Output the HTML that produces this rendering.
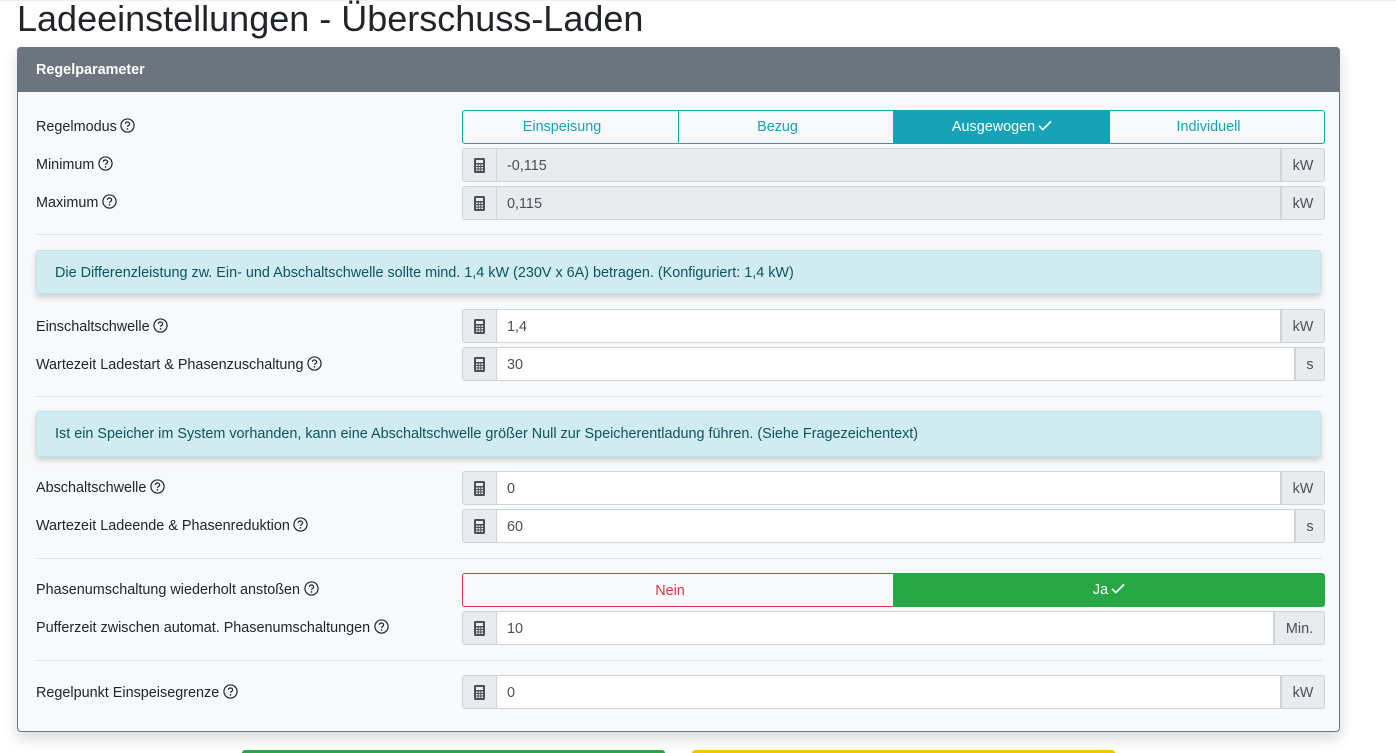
<!DOCTYPE html>
<html lang="de"><head><meta charset="utf-8"><title>Ladeeinstellungen</title>
<style>
*{box-sizing:border-box}
html,body{margin:0;padding:0;width:1396px;height:753px;overflow:hidden;background:#fff;font-family:"Liberation Sans",sans-serif;color:#212529;font-size:14.4px}
.a{position:absolute;white-space:nowrap}
.topshadow{left:0;top:0;width:1396px;height:2px;background:linear-gradient(#ececec,#fff)}
h1{position:absolute;margin:0;left:17px;top:-3px;font-size:36px;line-height:43px;font-weight:400;white-space:nowrap}
.card{left:17px;top:47px;width:1323px;height:685px;background:#f8f9fa;border:1px solid #6c757d;border-radius:4px;box-shadow:0 7px 14px rgba(0,0,0,.15)}
.head{left:17px;top:47px;width:1323px;height:45px;background:#6c757d;border-radius:4px 4px 0 0;color:#fff;font-weight:700;font-size:14.4px;line-height:44px;padding:1px 0 0 19px}
.l{left:36px;height:20px;line-height:20px;font-size:14.4px;color:#212529;display:flex;align-items:center;margin-top:1px}
.l svg{margin-left:3.500px;width:15px;height:15px;position:relative;top:-2px}
.hr{left:36px;width:1286px;height:1px;background:#e1e3e5}
.al{left:36px;width:1285px;background:#d1ecf1;border:1px solid #bee5eb;border-radius:3px;color:#0c5460;font-size:14.4px;padding-left:18px;box-shadow:0 3px 6px rgba(0,0,0,.18)}
.in{left:462px;width:863px;height:34px;display:flex;font-size:14.4px;color:#495057}
.ic{width:35px;background:#e9ecef;border:1px solid #ced4da;border-radius:3px 0 0 3px;display:flex;align-items:center;justify-content:center}
.ic svg{width:11px;height:15px}
.v{flex:1;background:#fff;border:1px solid #ced4da;border-left:0;line-height:33px;padding:1px 0 0 10px}
.v.d{background:#e9ecef}
.u{background:#e9ecef;border:1px solid #ced4da;border-radius:0 3px 3px 0;line-height:33px;padding-top:1px;text-align:center}
.btns{left:462px;top:110px;width:863px;height:34px;display:flex;border:1px solid #17a2b8;border-radius:3px;background:#f8f9fa;color:#17a2b8;font-size:14.4px;line-height:32px;text-align:center;overflow:hidden}
.btns div{border-right:1px solid #17a2b8}
.btns div:last-child{border:0}
.btns .on{background:#17a2b8;color:#fff}
.chk{display:inline-block;width:14px;height:11px;margin-left:3px;vertical-align:0.5px}
.hid{display:inline-block;width:17px;height:1px}
.nein{left:462px;top:573px;width:432px;height:34px;border:1px solid #dc3545;border-right:0;border-radius:3px 0 0 3px;color:#dc3545;text-align:center;line-height:34px;background:#f8f9fa}
.ja{left:893px;top:573px;width:432px;height:34px;background:#28a745;border-radius:0 3px 3px 0;color:#fff;text-align:center;line-height:35px}
.b1{left:242px;top:750px;width:423px;height:3px;background:#28a745;border-radius:4px 4px 0 0}
.b2{left:692px;top:750px;width:423px;height:3px;background:#ffc107;border-radius:4px 4px 0 0}
</style></head><body>
<svg width="0" height="0" style="position:absolute"><defs>
<symbol id="q" viewBox="0 0 16 16"><circle cx="8" cy="8" r="7" fill="none" stroke="#212529" stroke-width="1.3"/><path d="M5.7 6.2C5.8 4.9 6.8 4.3 8 4.3c1.300 0 2.300.8 2.300 1.900 0 1.800-2.300 1.700-2.300 3.300" fill="none" stroke="#212529" stroke-width="1.300"/><circle cx="8" cy="11.600" r=".9" fill="#212529"/></symbol>
<symbol id="c" viewBox="0 0 11 15"><path fill="#495057" fill-rule="evenodd" d="M1.500 0h8A1.500 1.500 0 0 1 11 1.500v12A1.500 1.500 0 0 1 9.500 15h-8A1.500 1.500 0 0 1 0 13.500v-12A1.500 1.500 0 0 1 1.500 0zM2 2v3h7V2zM2 6.500v1.500h1.700V6.500zM4.700 6.500v1.500h1.600V6.500zM7.300 6.500v1.500H9V6.500zM2 9v1.500h1.700V9zM4.700 9v1.500h1.600V9zM7.300 9v1.500H9V9zM2 11.500V13h1.700v-1.500zM4.700 11.500V13h1.600v-1.500zM7.300 11.500V13H9v-1.500z"/></symbol>
<symbol id="k" viewBox="0 0 14 11"><path d="M1 5.800l3.800 3.800L13 1.400" fill="none" stroke="#fff" stroke-width="1.700"/></symbol>
</defs></svg>
<div class="a topshadow"></div>
<h1>Ladeeinstellungen - Überschuss-Laden</h1>
<div class="a card"></div>
<div class="a head">Regelparameter</div>

<div class="a l" style="top:116px">Regelmodus<svg><use href="#q"/></svg></div>
<div class="a btns"><div style="width:216px">Einspeisung<span class="hid"></span></div><div style="width:215px">Bezug<span class="hid"></span></div><div class="on" style="width:216px;border:0">Ausgewogen<svg class="chk"><use href="#k"/></svg></div><div style="flex:1">Individuell<span class="hid"></span></div></div>

<div class="a l" style="top:154px">Minimum<svg><use href="#q"/></svg></div>
<div class="a in" style="top:148px"><div class="ic"><svg><use href="#c"/></svg></div><div class="v d">-0,115</div><div class="u" style="width:44px">kW</div></div>
<div class="a l" style="top:192px">Maximum<svg><use href="#q"/></svg></div>
<div class="a in" style="top:186px"><div class="ic"><svg><use href="#c"/></svg></div><div class="v d">0,115</div><div class="u" style="width:44px">kW</div></div>

<div class="a hr" style="top:234px"></div>
<div class="a al" style="top:250px;height:44px;line-height:44px">Die Differenzleistung zw. Ein- und Abschaltschwelle sollte mind. 1,4 kW (230V x 6A) betragen. (Konfiguriert: 1,4 kW)</div>

<div class="a l" style="top:316px">Einschaltschwelle<svg><use href="#q"/></svg></div>
<div class="a in" style="top:309px"><div class="ic"><svg><use href="#c"/></svg></div><div class="v">1,4</div><div class="u" style="width:44px">kW</div></div>
<div class="a l" style="top:354px">Wartezeit Ladestart &amp; Phasenzuschaltung<svg><use href="#q"/></svg></div>
<div class="a in" style="top:347px"><div class="ic"><svg><use href="#c"/></svg></div><div class="v">30</div><div class="u" style="width:30px">s</div></div>

<div class="a hr" style="top:396px"></div>
<div class="a al" style="top:411px;height:46px;line-height:45px">Ist ein Speicher im System vorhanden, kann eine Abschaltschwelle größer Null zur Speicherentladung führen. (Siehe Fragezeichentext)</div>

<div class="a l" style="top:477px">Abschaltschwelle<svg><use href="#q"/></svg></div>
<div class="a in" style="top:471px"><div class="ic"><svg><use href="#c"/></svg></div><div class="v">0</div><div class="u" style="width:44px">kW</div></div>
<div class="a l" style="top:515px">Wartezeit Ladeende &amp; Phasenreduktion<svg><use href="#q"/></svg></div>
<div class="a in" style="top:509px"><div class="ic"><svg><use href="#c"/></svg></div><div class="v">60</div><div class="u" style="width:30px">s</div></div>

<div class="a hr" style="top:558px"></div>
<div class="a l" style="top:579px">Phasenumschaltung wiederholt anstoßen<svg><use href="#q"/></svg></div>
<div class="a nein">Nein<span class="hid"></span></div>
<div class="a ja">Ja<svg class="chk"><use href="#k"/></svg></div>
<div class="a l" style="top:617px">Pufferzeit zwischen automat. Phasenumschaltungen<svg><use href="#q"/></svg></div>
<div class="a in" style="top:611px"><div class="ic"><svg><use href="#c"/></svg></div><div class="v">10</div><div class="u" style="width:51px">Min.</div></div>

<div class="a hr" style="top:660px"></div>
<div class="a l" style="top:682px">Regelpunkt Einspeisegrenze<svg><use href="#q"/></svg></div>
<div class="a in" style="top:675px"><div class="ic"><svg><use href="#c"/></svg></div><div class="v">0</div><div class="u" style="width:44px">kW</div></div>

<div class="a b1"></div>
<div class="a b2"></div>
</body></html>
